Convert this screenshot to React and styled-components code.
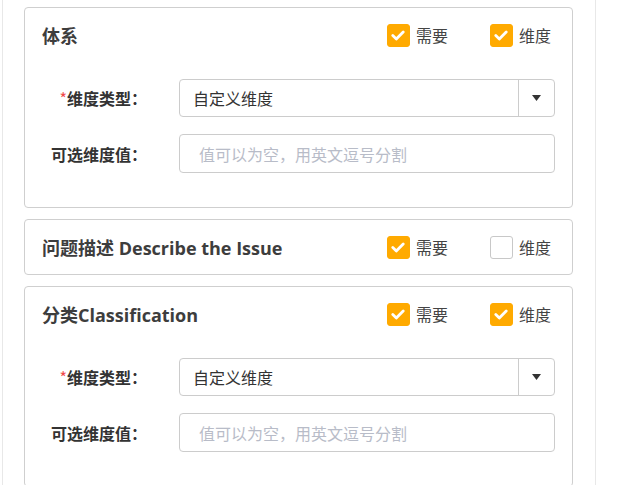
import React from "react";
import styled, { createGlobalStyle } from "styled-components";

const Global = createGlobalStyle`
  html, body { margin: 0; padding: 0; background: #fff; }
  body { font-family: "Open Sans", "Noto Sans CJK SC", sans-serif; color: #333; }
  * { box-sizing: border-box; }
`;

const Panel = styled.div`
  margin-left: 2px;
  width: 594px;
  height: 485px;
  overflow: hidden;
  border-left: 1px solid #e8e8e8;
  border-right: 1px solid #e8e8e8;
  padding: 7px 22px 0 21px;
  display: flex;
  flex-direction: column;
  gap: 11px;
`;

const Card = styled.div`
  border: 1px solid #cfcfcf;
  border-radius: 4px;
  background: #fff;
  flex-shrink: 0;
`;

const Header = styled.div`
  height: 54px;
  display: flex;
  align-items: center;
  padding: 0 21px 0 17px;
`;

const Title = styled.div`
  flex: 1;
  font-size: 18px;
  font-weight: 700;
  color: #3d3d3d;
  font-family: "Open Sans", "Noto Sans CJK SC", sans-serif;
  margin-top: -1px;
`;

const Check = styled.label`
  display: flex;
  align-items: center;
  gap: 6px;
  font-size: 16px;
  color: #444;
  font-family: "Noto Sans CJK SC", sans-serif;
  margin-left: ${(p) => (p.$first ? "0" : "42px")};
`;

const Box = styled.span`
  width: 23px;
  height: 23px;
  border-radius: 3px;
  display: flex;
  align-items: center;
  justify-content: center;
  background: ${(p) => (p.$on ? "#ffaa00" : "#fff")};
  border: 1px solid ${(p) => (p.$on ? "#ffaa00" : "#c8c8c8")};
`;

const Body = styled.div`
  padding: 17px 17px 34px 0;
  display: flex;
  flex-direction: column;
  gap: 17px;
`;

const Row = styled.div`
  display: grid;
  grid-template-columns: 122px 1fr;
  column-gap: 32px;
  align-items: center;
`;

const Label = styled.div`
  text-align: right;
  font-size: 16px;
  font-weight: 700;
  color: #333;
  font-family: "Noto Sans CJK SC", sans-serif;
`;

const Star = styled.span`
  color: #f04848;
  font-weight: 400;
`;

const SelectBox = styled.div`
  height: 38px;
  border: 1px solid #cccccc;
  border-radius: 4px;
  display: flex;
  align-items: stretch;
`;

const SelectText = styled.div`
  flex: 1;
  display: flex;
  align-items: center;
  padding-left: 13px;
  font-size: 16px;
  color: #333;
  font-family: "Noto Sans CJK SC", sans-serif;
`;

const Arrow = styled.div`
  width: 36px;
  border-left: 1px solid #cccccc;
  display: flex;
  align-items: center;
  justify-content: center;
`;

const Input = styled.input`
  height: 39px;
  width: 100%;
  border: 1px solid #cccccc;
  border-radius: 4px;
  padding: 0 19px;
  font-size: 16px;
  font-family: "Noto Sans CJK SC", sans-serif;
  outline: none;
  &::placeholder { color: #b8bcc8; }
`;

const Tick = () => (
  <svg width="14" height="11" viewBox="0 0 14 11">
    <path d="M1.8 5.6 L5.3 9 L12.2 2" fill="none" stroke="#fff" strokeWidth="2.8" strokeLinecap="round" strokeLinejoin="round" />
  </svg>
);

const CheckItem = ({ on, first, children }) => (
  <Check $first={first}>
    <Box $on={on}>{on && <Tick />}</Box>
    {children}
  </Check>
);

const Section = ({ title, need, dim, form }) => (
  <Card>
    <Header>
      <Title>{title}</Title>
      <CheckItem on={need} first>需要</CheckItem>
      <CheckItem on={dim}>维度</CheckItem>
    </Header>
    {form && (
      <Body>
        <Row>
          <Label><Star>*</Star>维度类型：</Label>
          <SelectBox>
            <SelectText>自定义维度</SelectText>
            <Arrow>
              <svg width="9" height="6" viewBox="0 0 9 6"><path d="M0 0 H9 L4.5 6 Z" fill="#333" /></svg>
            </Arrow>
          </SelectBox>
        </Row>
        <Row>
          <Label>可选维度值：</Label>
          <Input placeholder="值可以为空，用英文逗号分割" />
        </Row>
      </Body>
    )}
  </Card>
);

export default function App() {
  return (
    <>
      <Global />
      <Panel>
        <Section title="体系" need dim form />
        <Section title="问题描述 Describe the Issue" need dim={false} />
        <Section title="分类Classification" need dim form />
      </Panel>
    </>
  );
}
